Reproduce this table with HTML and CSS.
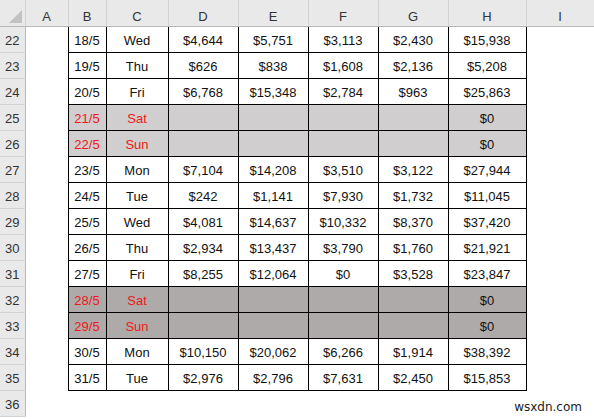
FILE: index.html
```html
<!DOCTYPE html>
<html lang="en">
<head>
    <meta charset="UTF-8">
    <title>Sheet</title>
    <link rel="stylesheet" href="styles.css">
</head>
<body>
    <table class="sheet">
        <colgroup>
            <col class="c-rh"><col class="c-a"><col class="c-b"><col class="c-c">
            <col class="c-d"><col class="c-e"><col class="c-f"><col class="c-g">
            <col class="c-h"><col class="c-i">
        </colgroup>
        <thead>
            <tr class="col-heads">
                <th class="corner"><span class="tri"></span></th>
                <th>A</th><th>B</th><th>C</th><th>D</th><th>E</th><th>F</th><th>G</th><th>H</th><th>I</th>
            </tr>
        </thead>
        <tbody id="rows"></tbody>
    </table>
    <div class="mark">wsxdn.com</div>
    <script>
        const data = [
            [22, '18/5', 'Wed', '$4,644', '$5,751', '$3,113', '$2,430', '$15,938'],
            [23, '19/5', 'Thu', '$626', '$838', '$1,608', '$2,136', '$5,208'],
            [24, '20/5', 'Fri', '$6,768', '$15,348', '$2,784', '$963', '$25,863'],
            [25, '21/5', 'Sat', '', '', '', '', '$0', 'wk1'],
            [26, '22/5', 'Sun', '', '', '', '', '$0', 'wk1'],
            [27, '23/5', 'Mon', '$7,104', '$14,208', '$3,510', '$3,122', '$27,944'],
            [28, '24/5', 'Tue', '$242', '$1,141', '$7,930', '$1,732', '$11,045'],
            [29, '25/5', 'Wed', '$4,081', '$14,637', '$10,332', '$8,370', '$37,420'],
            [30, '26/5', 'Thu', '$2,934', '$13,437', '$3,790', '$1,760', '$21,921'],
            [31, '27/5', 'Fri', '$8,255', '$12,064', '$0', '$3,528', '$23,847'],
            [32, '28/5', 'Sat', '', '', '', '', '$0', 'wk2'],
            [33, '29/5', 'Sun', '', '', '', '', '$0', 'wk2'],
            [34, '30/5', 'Mon', '$10,150', '$20,062', '$6,266', '$1,914', '$38,392'],
            [35, '31/5', 'Tue', '$2,976', '$2,796', '$7,631', '$2,450', '$15,853']
        ];

        const body = document.getElementById('rows');
        data.forEach(row => {
            const tr = document.createElement('tr');
            if (row[8]) tr.className = row[8];
            let html = `<th class="rh">${row[0]}</th><td class="blank"></td>`;
            for (let i = 1; i < 8; i++) {
                const cls = i < 3 ? 'cell day' : 'cell';
                html += `<td class="${cls}">${row[i]}</td>`;
            }
            html += '<td class="blank"></td>';
            tr.innerHTML = html;
            body.appendChild(tr);
        });

        const last = document.createElement('tr');
        last.innerHTML = '<th class="rh">36</th>' + '<td class="blank"></td>'.repeat(9);
        body.appendChild(last);
    </script>
</body>
</html>
```

FILE: styles.css
```css
body {
    margin: 0;
    background: #fff;
    font-family: 'Liberation Sans', Arial, sans-serif;
    overflow: hidden;
    height: 419px;
    position: relative;
}
.sheet {
    border-collapse: collapse;
    table-layout: fixed;
    width: 594px;
    font-size: 13px;
}
.c-rh { width: 25px; }
.c-a { width: 43px; }
.c-b { width: 38px; }
.c-c { width: 62px; }
.c-d, .c-e, .c-f, .c-g { width: 70px; }
.c-h { width: 78px; }
.c-i { width: 68px; }

.col-heads th {
    height: 26px;
    padding: 7px 0 0 0;
    box-sizing: border-box;
    background: #e9e9e9;
    border-bottom: 1px solid #b9b9b9;
    border-right: 1px solid #d2d2d2;
    font-weight: normal;
    color: #333;
    font-size: 13px;
}
.col-heads .corner {
    position: relative;
}
.tri {
    position: absolute;
    right: 3px;
    bottom: 3px;
    width: 0;
    height: 0;
    border-left: 13px solid transparent;
    border-bottom: 13px solid #c2c2c2;
}
.rh {
    height: 26px;
    padding: 3px 0 0 0;
    box-sizing: border-box;
    background: #e9e9e9;
    border-bottom: 1px solid #d2d2d2;
    border-right: 1px solid #b9b9b9;
    font-weight: normal;
    color: #333;
    font-size: 13px;
    text-align: center;
}
.blank {
    padding: 0;
}
.cell {
    border: 1px solid #000;
    text-align: center;
    padding: 3px 0 0 0;
    color: #111;
    white-space: nowrap;
}
.wk1 .cell { background: #d0cece; }
.wk2 .cell { background: #aeaaaa; }
.wk1 .day, .wk2 .day { color: #f01818; }

.mark {
    position: absolute;
    right: 12px;
    bottom: 5px;
    font-size: 12px;
    color: #222;
    font-family: 'DejaVu Sans', sans-serif;
}
```
